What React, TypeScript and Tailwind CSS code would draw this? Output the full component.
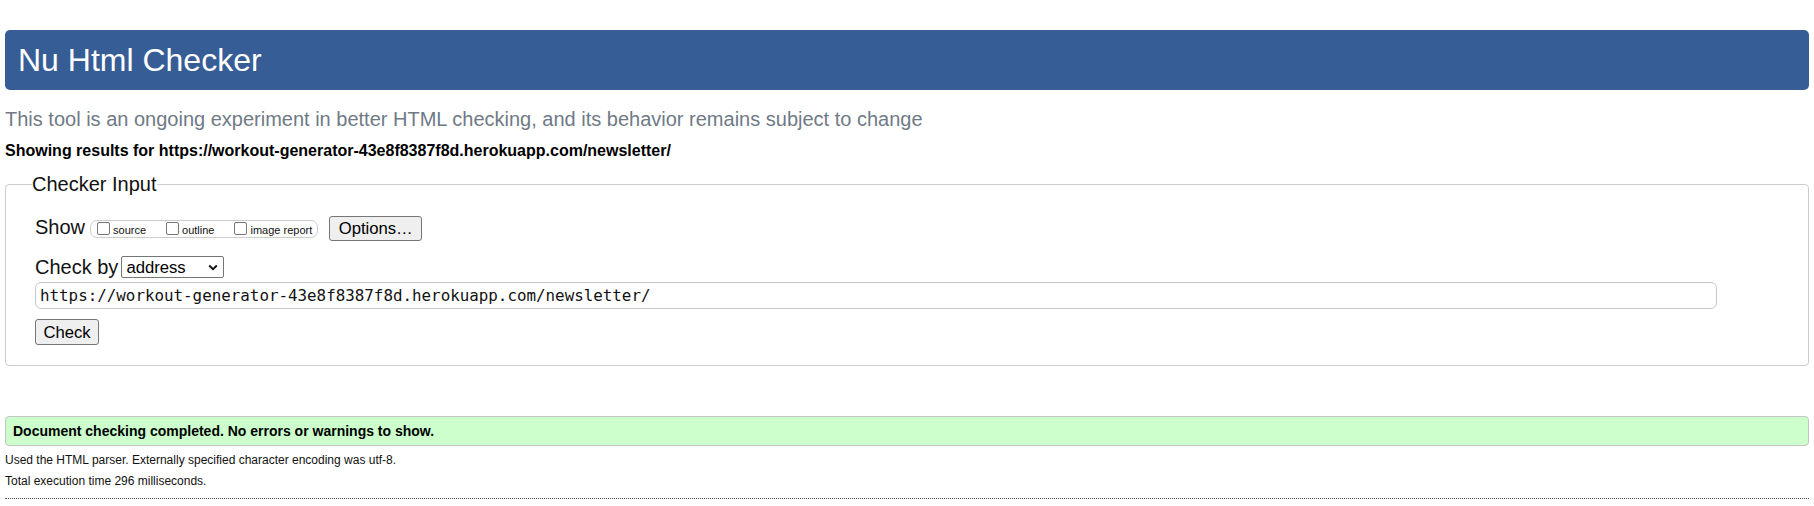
import React from "react";

function Box({ first }: { first?: boolean }) {
  return (
    <span
      className={
        (first ? "ml-[4px] " : "ml-[20px] ") +
        "mr-[3px] mt-[1px] block h-[13px] w-[13px] shrink-0 rounded-[2px] border border-[#767676] bg-white"
      }
    />
  );
}

export default function App() {
  return (
    <div className="min-h-[506px] bg-white px-[5px] pt-[30px] font-['Liberation_Sans',Arial,sans-serif] text-[#111]">
      <div className="flex h-[60px] items-center rounded-[5px] bg-[#365d96] pl-[13px] text-[32px] leading-[37px] text-white">
        Nu Html Checker
      </div>
      <p className="mt-[17.5px] text-[20px] leading-[23px] text-[#6f7a86]">
        This tool is an ongoing experiment in better HTML checking, and its behavior remains subject to change
      </p>
      <p className="mt-[11.5px] text-[16px] font-bold leading-[18px] text-black">
        Showing results for https://workout-generator-43e8f8387f8d.herokuapp.com/newsletter/
      </p>
      <fieldset className="mt-[13px] rounded-[4px] border border-[#cccccc]">
        <legend className="ml-[26px] text-[20px] leading-[23px] text-[#111]">Checker Input</legend>
        <div className="pb-[20px] pl-[29px] pr-[91px] pt-[20px]">
          <div className="flex items-start">
            <span className="text-[20px] leading-[23px]">Show</span>
            <div className="ml-[5px] mt-[4px] flex h-[18px] items-start rounded-[7px] border border-[#cccccc] pl-[2px] pr-[5px]">
              <Box first />
              <span className="mt-[3px] text-[11px] leading-[13px]">source</span>
              <Box />
              <span className="mt-[3px] text-[11px] leading-[13px]">outline</span>
              <Box />
              <span className="mt-[3px] text-[11px] leading-[13px]">image report</span>
            </div>
            <div className="ml-[11px] flex h-[25px] w-[93px] items-center justify-center rounded-[3px] border border-[#767676] bg-[#efefef] text-[16.67px] leading-[19px] text-black">
              Options…
            </div>
          </div>
          <div className="mt-[15px] flex items-start">
            <span className="text-[20px] leading-[23px]">Check by</span>
            <div className="ml-[3px] flex h-[22px] w-[103px] items-center justify-between rounded-[2px] border border-[#767676] bg-white pl-[4px] pr-[4px] text-[16.67px] leading-[19px] text-black">
              <span>address</span>
              <svg width="10" height="7" viewBox="0 0 10 7" className="mr-[1px]">
                <path d="M1.2 1.5 L5 5.2 L8.8 1.5" fill="none" stroke="#111" strokeWidth="1.9" />
              </svg>
            </div>
          </div>
          <div className="mt-[3px] flex h-[27px] w-full items-center rounded-[6px] border border-[#c8c8c8] pl-[4px] font-['DejaVu_Sans_Mono',monospace] text-[15.85px] leading-[19px] text-[#111]">
            https://workout-generator-43e8f8387f8d.herokuapp.com/newsletter/
          </div>
          <div className="mt-[10px] flex h-[26px] w-[64px] items-center justify-center rounded-[3px] border border-[#767676] bg-[#efefef] text-[16.67px] leading-[19px] text-black">
            Check
          </div>
        </div>
      </fieldset>
      <div className="mt-[50px] h-[30px] rounded-[4px] border border-[#c4c4c4] bg-[#ccffcc] pl-[7px] pt-[6px] text-[14px] font-bold leading-[16px] text-black">
        Document checking completed. No errors or warnings to show.
      </div>
      <p className="mt-[6.7px] text-[12px] leading-[14px] text-[#111]">
        Used the HTML parser. Externally specified character encoding was utf-8.
      </p>
      <p className="mt-[7.3px] text-[12px] leading-[14px] text-[#111]">Total execution time 296 milliseconds.</p>
      <div className="mt-[9.7px] border-t border-dotted border-[#555]" />
    </div>
  );
}
